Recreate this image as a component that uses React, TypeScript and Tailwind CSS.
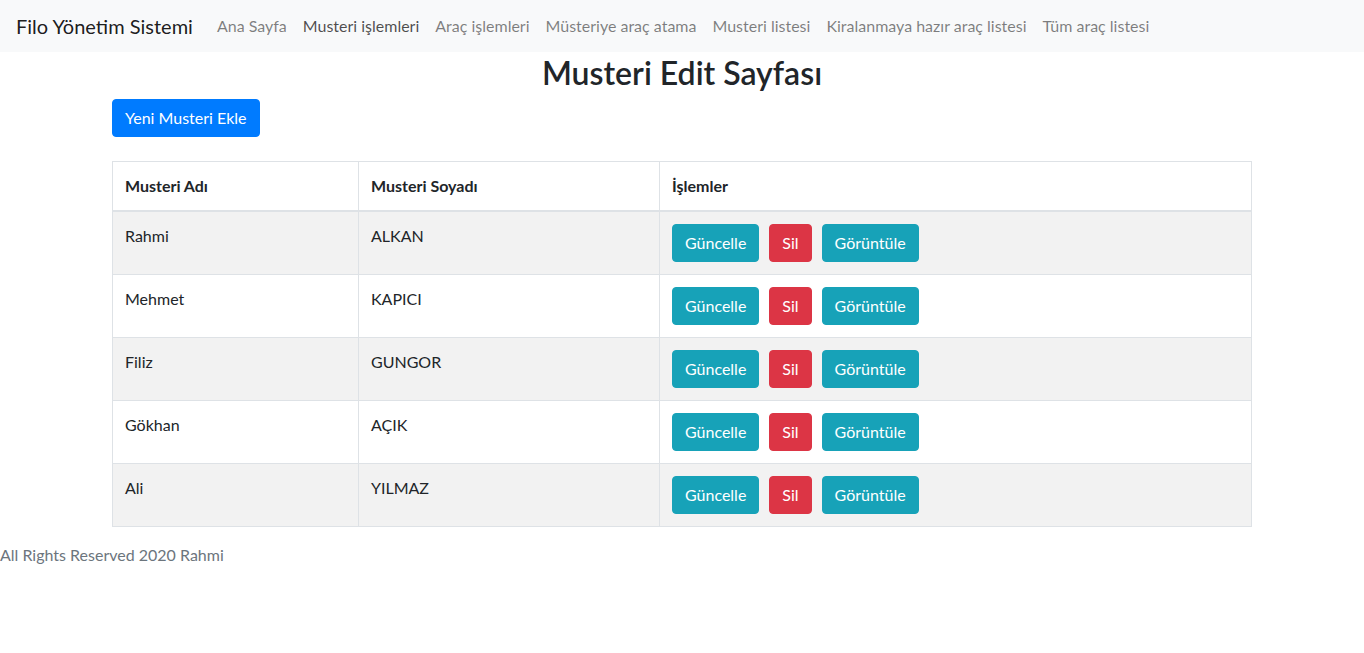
import React from "react";

const links = [
  "Ana Sayfa",
  "Musteri işlemleri",
  "Araç işlemleri",
  "Müsteriye araç atama",
  "Musteri listesi",
  "Kiralanmaya hazır araç listesi",
  "Tüm araç listesi",
];

const customers = [
  { ad: "Rahmi", soyad: "ALKAN" },
  { ad: "Mehmet", soyad: "KAPICI" },
  { ad: "Filiz", soyad: "GUNGOR" },
  { ad: "Gökhan", soyad: "AÇIK" },
  { ad: "Ali", soyad: "YILMAZ" },
];

export default function App() {
  return (
    <div className="min-h-screen bg-white font-['Segoe_UI','Lato',sans-serif] text-base leading-6 text-[#212529]">
      <nav className="flex h-[52px] items-center bg-[#f8f9fa] px-4">
        <a href="#" className="mr-4 text-xl leading-[30px] text-black/90">
          Filo Yönetim Sistemi
        </a>
        <ul className="flex">
          {links.map((l, i) => (
            <li key={l}>
              <a href="#" className={`block px-2 py-2 ${i === 1 ? "text-black/70" : "text-black/50"}`}>
                {l}
              </a>
            </li>
          ))}
        </ul>
      </nav>

      <main className="mx-auto w-[1170px] px-[15px]">
        <h2 className="mb-[7px] pt-[2px] text-center text-[32px] font-semibold leading-[38px]">Musteri Edit Sayfası</h2>
        <button className="rounded border border-[#007bff] bg-[#007bff] px-3 py-1.5 text-white">Yeni Musteri Ekle</button>

        <table className="mb-4 mt-6 w-full border-collapse border border-[#dee2e6] text-left">
          <thead>
            <tr>
              <th className="w-[246px] border border-b-2 border-[#dee2e6] p-3 font-bold">Musteri Adı</th>
              <th className="w-[301px] border border-b-2 border-[#dee2e6] p-3 font-bold">Musteri Soyadı</th>
              <th className="border border-b-2 border-[#dee2e6] p-3 font-bold">İşlemler</th>
            </tr>
          </thead>
          <tbody>
            {customers.map((c, i) => (
              <tr key={c.ad} className={i % 2 === 0 ? "bg-[#f2f2f2]" : ""}>
                <td className="border border-[#dee2e6] p-3 align-top">{c.ad}</td>
                <td className="border border-[#dee2e6] p-3 align-top">{c.soyad}</td>
                <td className="border border-[#dee2e6] p-3 align-top">
                  <div className="flex gap-[10px]">
                    <button className="rounded border border-[#17a2b8] bg-[#17a2b8] px-3 py-1.5 text-white">Güncelle</button>
                    <button className="rounded border border-[#dc3545] bg-[#dc3545] px-3 py-1.5 text-white">Sil</button>
                    <button className="rounded border border-[#17a2b8] bg-[#17a2b8] px-3 py-1.5 text-white">Görüntüle</button>
                  </div>
                </td>
              </tr>
            ))}
          </tbody>
        </table>
      </main>

      <footer className="text-[#6c757d]">All Rights Reserved 2020 Rahmi</footer>
    </div>
  );
}
